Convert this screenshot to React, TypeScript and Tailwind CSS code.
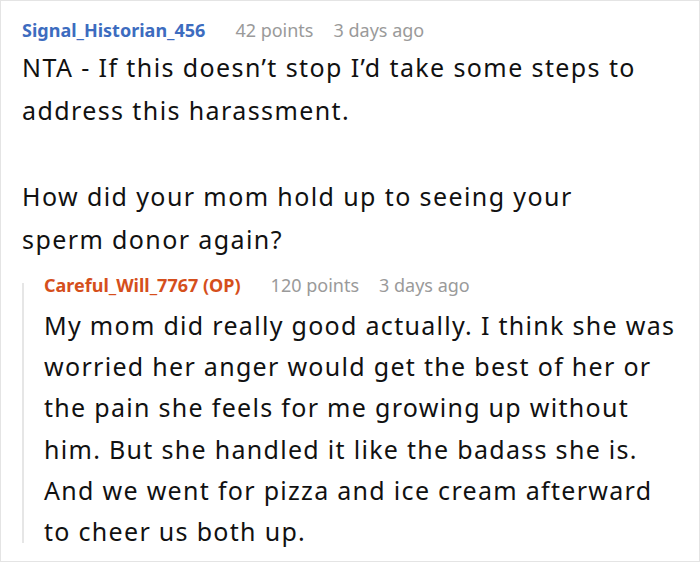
const lines1 = [
  "NTA - If this doesn’t stop I’d take some steps to",
  "address this harassment.",
];
const lines2 = ["How did your mom hold up to seeing your", "sperm donor again?"];
const reply = [
  "My mom did really good actually. I think she was",
  "worried her anger would get the best of her or",
  "the pain she feels for me growing up without",
  "him. But she handled it like the badass she is.",
  "And we went for pizza and ice cream afterward",
  "to cheer us both up.",
];

const Meta = ({ name, color, points }: { name: string; color: string; points: string }) => (
  <div className="flex items-center gap-[30px] text-[18px] leading-[24px]">
    <span className={`font-bold ${color}`}>{name}</span>
    <div className="flex gap-[20px] text-[#9a9a9a]">
      <span>{points}</span>
      <span>3 days ago</span>
    </div>
  </div>
);

export default function App() {
  return (
    <div
      className="h-[562px] w-[700px] overflow-hidden border border-[#e4e4e4] bg-white text-[#111]"
      style={{ fontFamily: '"Noto Sans", "Open Sans", sans-serif' }}
    >
      <div className="pl-[21px] pt-[17px]">
        <Meta name="Signal_Historian_456" color="text-[#3d6cbf]" points="42 points" />
        <div className="mt-[4px] text-[25px] leading-[43px] tracking-[1.4px]">
          {lines1.map((l) => (
            <div key={l}>{l}</div>
          ))}
          <div className="h-[43px]" />
          {lines2.map((l) => (
            <div key={l}>{l}</div>
          ))}
        </div>
        <div className="mt-[12px] flex">
          <div className="mb-[9px] mt-[10px] w-[2px] bg-[#e6e6e6]" />
          <div className="pl-[20px]">
            <Meta name="Careful_Will_7767 (OP)" color="text-[#d54f1c]" points="120 points" />
            <div className="mt-[8px] text-[25px] leading-[41.2px] tracking-[1.3px]">
              {reply.map((l) => (
                <div key={l}>{l}</div>
              ))}
            </div>
          </div>
        </div>
      </div>
    </div>
  );
}
